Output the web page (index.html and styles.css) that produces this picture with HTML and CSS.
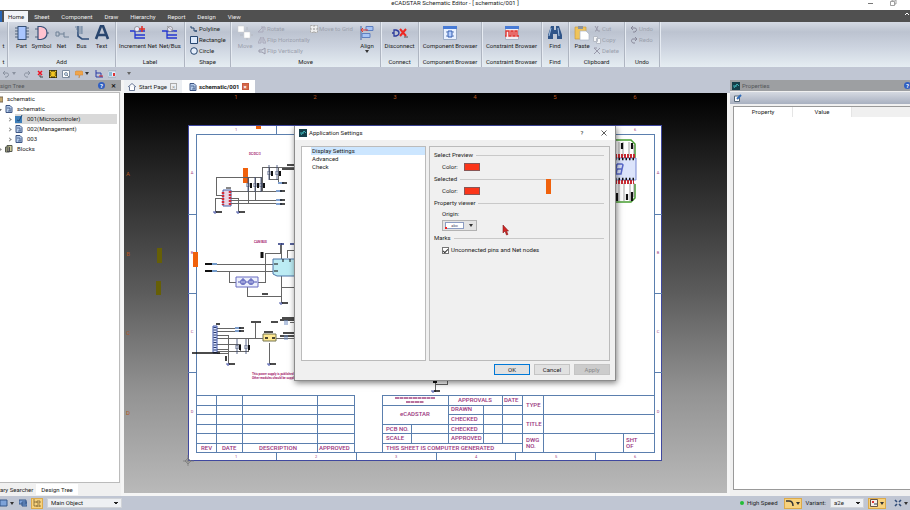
FILE: index.html
```html
<!DOCTYPE html>
<html lang="en">
<head>
<meta charset="utf-8">
<title>eCADSTAR Schematic Editor</title>
<link rel="stylesheet" href="styles.css">
</head>
<body>
<header class="titlebar">
  <span class="app-title">eCADSTAR Schematic Editor - [ schematic/001 ]</span>
  <span class="window-buttons">
    <button aria-label="Minimize"><svg width="8" height="8"><path d="M2 4.500h5" stroke="#777" fill="none"/></svg></button>
    <button aria-label="Restore"><svg width="8" height="8"><path d="M1.500 2.500h4v4h-4zM3 2V1h4v4H6" stroke="#777" stroke-width=".7" fill="none"/></svg></button>
  </span>
</header>

<nav class="menu">
  <span class="app-button"></span>
  <button class="current">Home</button><button>Sheet</button><button>Component</button><button>Draw</button><button>Hierarchy</button><button>Report</button><button>Design</button><button>View</button>
  <span class="collapse"><svg width="6" height="6"><path d="M1 4l2-2 2 2" stroke="#fff" fill="none"/></svg></span>
</nav>

<div class="ribbon">
  <section class="group"><div class="tools"><button class="big"><svg class="icon"></svg>t</button></div><h2>t</h2></section>
  <section class="group">
    <div class="tools add">
      <button class="big"><svg class="icon" viewBox="0 0 16 16"><path d="M1 3h14M1 6h14M1 9h14M1 12h14" stroke="#52647d"/><rect x="4" y="1.500" width="8" height="13" fill="#a9c6ff" stroke="#355078"/></svg>Part</button>
      <button class="big"><svg class="icon" viewBox="0 0 16 16"><path d="M1 4h3M1 12h3M12 8h3" stroke="#52647d"/><path d="M4 1.500h3c8 1 8 12 0 13H4z" fill="#ffc3d0" stroke="#355078" stroke-width="1.200"/></svg>Symbol</button>
      <button class="big"><svg class="icon" viewBox="0 0 16 16"><path d="M2 7h3v4H2zM5 9h5v3h5M10 9V7" fill="none" stroke="#6f8196"/></svg>Net</button>
      <button class="big"><svg class="icon" viewBox="0 0 16 16"><path d="M4 1v10l4 3h7" fill="none" stroke="#314f7a" stroke-width="1.600"/><path d="M1 2h7M2 4h6M3 6h5M4 8h4M8 1v8" stroke="#7186a0" fill="none"/></svg>Bus</button>
      <button class="big"><svg class="icon" viewBox="0 0 16 16"><path d="M2 14L7 1h2l5 13M4 10h8" fill="none" stroke="#29466f" stroke-width="2.600"/></svg>Text</button>
    </div><h2>Add</h2>
  </section>
  <section class="group">
    <div class="tools label">
      <button class="big"><svg class="icon" viewBox="0 0 16 16"><path d="M0 6h15M5 6v7h10M5 10h10" stroke="#2437cf" stroke-width="1.300" fill="none"/><circle cx="7" cy="4" r="2.500" fill="#eef" stroke="#777" stroke-width=".7"/><path d="M9 4h6M12 1v6" stroke="#e02e28" stroke-width="1.500"/></svg>Increment Net</button>
      <button class="big"><svg class="icon" viewBox="0 0 16 16"><path d="M0 6h15M5 6v7h10M5 10h10" stroke="#2437cf" stroke-width="1.300" fill="none"/><circle cx="8" cy="4" r="2.500" fill="#eef" stroke="#777" stroke-width=".7"/><path d="M5 1l7 6" stroke="#888" stroke-width=".7"/></svg>Net/Bus</button>
    </div><h2>Label</h2>
  </section>
  <section class="group">
    <div class="tools stack">
      <button><svg viewBox="0 0 8 8"><path d="M1 1v2h3v3h3M6 5v2" fill="none" stroke="#27466f"/></svg>Polyline</button>
      <button><svg viewBox="0 0 8 8"><path d="M.5.5h7v7h-7z" fill="#dce9fb" stroke="#27466f"/></svg>Rectangle</button>
      <button><svg viewBox="0 0 8 8"><circle cx="4" cy="4" r="3.300" fill="#e6effc" stroke="#27466f"/></svg>Circle</button>
    </div><h2>Shape</h2>
  </section>
  <section class="group">
    <div class="tools move">
      <button class="big" disabled><svg class="icon" viewBox="0 0 16 16"><path d="M1 1h6v6H1zM7 7h6v6H7z" fill="#fff" stroke="#ccc" stroke-width=".5"/><path d="M10 2v3M10 15v-2M3 10h3M14 10h2" stroke="#b4b8c0"/></svg>Move</button>
      <div class="stack">
        <button disabled><svg viewBox="0 0 8 8"><path d="M0 7l5-5v5zM3 2h4v3" fill="none" stroke="#aab"/></svg>Rotate</button>
        <button disabled><svg viewBox="0 0 8 8"><path d="M0 7l3-6v6zM5 1l3 6H5z" fill="none" stroke="#aab"/></svg>Flip Horizontally</button>
        <button disabled><svg viewBox="0 0 8 8"><path d="M1 3h3l3-2v6L4 5H1z" fill="none" stroke="#99a"/></svg>Flip Vertically</button>
      </div>
      <div class="stack"><button disabled><svg viewBox="0 0 8 8"><path d="M.5.5h7v7h-7zM4 0v8M0 4h8" fill="#eee" stroke="#aaa" stroke-dasharray="2 1"/></svg>Move to Grid</button></div>
      <button class="big"><svg class="icon" viewBox="0 0 16 16"><path d="M2 1v14" stroke="#4565a5"/><path d="M7 1.500h7v4H7zM3 8.500h8v4H3z" fill="#a6c3f4" stroke="#5e7fc0"/><path d="M2 5h7M4 3L2 5l2 2" stroke="#e3372f" fill="none"/></svg>Align<i class="caret"></i></button>
    </div><h2>Move</h2>
  </section>
  <section class="group"><div class="tools"><button class="big"><svg class="icon" viewBox="0 0 16 16"><path d="M0 8h2M2 5v6h2c4-1 4-5 0-6z" fill="none" stroke="#2e3c9c" stroke-width="1.300"/><path d="M8 4l6 7M14 4l-6 7" stroke="#ed2822" stroke-width="2"/><path d="M12 12h4" stroke="#555"/></svg>Disconnect</button></div><h2>Connect</h2></section>
  <section class="group"><div class="tools"><button class="big"><svg class="icon" viewBox="0 0 16 16"><path d="M1.500 1.500h13v13h-13z" fill="#e9f1ff" stroke="#9aaac4"/><path d="M1 1h14v3H1z" fill="#487bd6"/><path d="M6 6h4v6H6z" fill="#b6d0ff" stroke="#315baf"/><path d="M4 7h2M4 11h2M10 7h2M10 11h2" stroke="#6484bd"/></svg>Component Browser</button></div><h2>Component Browser</h2></section>
  <section class="group"><div class="tools"><button class="big"><svg class="icon" viewBox="0 0 16 16"><path d="M1.500 1.500h13v13h-13z" fill="#f3eef3" stroke="#aab3c4"/><path d="M1 1h14v3H1z" fill="#487bd6"/><path d="M1 11h1V6h3v5h2V6h2v5h2V6h2v5h2" fill="none" stroke="#e1332e" stroke-width="1.400"/></svg>Constraint Browser</button></div><h2>Constraint Browser</h2></section>
  <section class="group"><div class="tools"><button class="big"><svg class="icon" viewBox="0 0 16 16"><path d="M4 1h3v4h2V1h3l3 9v4h-5V9H6v5H1v-4z" fill="#2f5488"/><path d="M4 3l-2 8M11 3l1 8" stroke="#a7c4e7"/></svg>Find</button></div><h2>Find</h2></section>
  <section class="group">
    <div class="tools clip">
      <button class="big"><svg class="icon" viewBox="0 0 16 16"><path d="M1 2h11v12H1z" fill="#efc45b" stroke="#c79632" stroke-width=".6"/><path d="M4 1h5v3H4z" fill="#8b939f"/><path d="M6 6h6l3 3v6H6z" fill="#fff" stroke="#aab6c8" stroke-width=".7"/></svg>Paste</button>
      <div class="stack">
        <button disabled><svg viewBox="0 0 8 8"><path d="M2 1l3 5M5 1L3 6M2 6h1M5 6h2" stroke="#99a" fill="none"/></svg>Cut</button>
        <button disabled><svg viewBox="0 0 8 8"><path d="M.5.5h4v5h-4zM3.500 2.500h4v5h-4z" fill="#f4f5f7" stroke="#b5bac4"/></svg>Copy</button>
        <button disabled><svg viewBox="0 0 8 8"><path d="M1 1l6 6M7 1L1 7M1 1h3" stroke="#99a" fill="none"/></svg>Delete</button>
      </div>
    </div><h2>Clipboard</h2>
  </section>
  <section class="group">
    <div class="tools stack">
      <button disabled><svg viewBox="0 0 8 8"><path d="M3 1L1 3l2 2M1 3h4c2 0 2 3 0 4H3" stroke="#889" fill="none"/></svg>Undo</button>
      <button disabled><svg viewBox="0 0 8 8"><path d="M5 1l2 2-2 2M7 3H3C1 3 1 6 3 7h2" stroke="#889" fill="none"/></svg>Redo</button>
    </div><h2>Undo</h2>
  </section>
</div>

<div class="quick">
  <button aria-label="Undo"><svg viewBox="0 0 8 8"><path d="M3 1L1 3l2 2M1 3h4c2 0 2 3 0 4H3" stroke="#8a92a0" fill="none"/></svg></button><i class="caret dim"></i>
  <button aria-label="Redo"><svg viewBox="0 0 8 8"><path d="M5 1l2 2-2 2M7 3H3C1 3 1 6 3 7h2" stroke="#8a92a0" fill="none"/></svg></button>
  <button aria-label="Cancel"><svg viewBox="0 0 8 8"><path d="M2 1l4 4M6 1L2 5" stroke="#e12" stroke-width="1.500"/><path d="M4 5v2h3" stroke="#444" fill="none"/></svg></button>
  <button aria-label="Fit"><svg viewBox="0 0 8 8"><path d="M0 0h8v8H0z" fill="#3c3510"/><path d="M1 1l6 6M7 1L1 7M4 1v6M1 4h6" stroke="#f3c51f" stroke-width="1.200"/></svg></button>
  <button aria-label="Zoom area"><svg viewBox="0 0 8 8"><path d="M.5.5h7v7h-7z" fill="#fff" stroke="#7b8a9f"/><circle cx="4" cy="4" r="1.500" fill="#d5e7ff" stroke="#567" stroke-width=".7"/><path d="M5 5l2 2" stroke="#456" stroke-width=".7"/></svg></button>
  <button aria-label="Comment"><svg viewBox="0 0 8 8"><path d="M1 1h6l1 1v3H5L4 8V5H0V2z" fill="#efa54c" stroke="#c98234" stroke-width=".5"/></svg></button><i class="caret"></i>
  <button aria-label="Origin"><svg viewBox="0 0 8 8"><path d="M1 0v7h7M1 3h5v4" stroke="#2b3aa5" fill="none"/><path d="M4 6h4" stroke="#d33"/></svg></button>
  <button aria-label="Compare"><svg viewBox="0 0 8 8"><path d="M0 1h8v6H0z" fill="#e6efff" stroke="#789" stroke-width=".5"/><path d="M1 3h3M1 5h3" stroke="#38a"/><path d="M5 3h2v3H5z" fill="#d33"/></svg></button>
  <i class="caret more"></i>
</div>

<main class="workspace">
  <aside class="dock left">
    <h2 class="dock-title">sign Tree <button class="help" aria-label="Help">?</button><button class="close" aria-label="Close">✕</button></h2>
    <ul class="tree">
      <li class="level0"><svg viewBox="0 0 8 8"><path d="M0 2h8v5H0z" fill="#c4a76b" stroke="#765"/></svg>schematic</li>
      <li class="level1"><i class="twist open"></i><svg viewBox="0 0 8 8"><use href="#sheet"/></svg>schematic</li>
      <li class="level2 selected"><i class="twist"></i><svg viewBox="0 0 8 8"><path d="M0 1h7v7H0z" fill="#3d7db8"/><path d="M2 5l2 1 3-6" stroke="#1d4977" fill="none"/></svg>001(Microcontroler)</li>
      <li class="level2"><i class="twist"></i><svg viewBox="0 0 8 8"><use href="#sheet"/></svg>002(Management)</li>
      <li class="level2"><i class="twist"></i><svg viewBox="0 0 8 8"><use href="#sheet"/></svg>003</li>
      <li class="level1"><i class="twist"></i><svg viewBox="0 0 8 8"><path d="M2 .5h5v6H2zM.5 2h4v5h-4z" fill="#d5cf9c" stroke="#555a50"/><path d="M2 4h3M2 6h3" stroke="#445"/></svg>Blocks</li>
    </ul>
    <div class="dock-tabs"><button>ary Searcher</button><button class="current">Design Tree</button></div>
  </aside>

  <section class="editor">
    <div class="doc-tabs">
      <button><svg viewBox="0 0 8 8"><path d="M0 4l4-3.500L8 4M1.500 3.500V7.500h5v-4" fill="#fff" stroke="#46587e" stroke-width=".8"/></svg>Start Page <span class="x">×</span></button>
      <button class="current"><svg viewBox="0 0 8 8"><use href="#sheet"/></svg>schematic/001 <span class="x">×</span></button>
    </div>
    <svg class="canvas" viewBox="124 93 603 400" role="img" aria-label="Schematic sheet 001">
      <defs>
        <g id="sheet"><path d="M1 .5h4l2 2v5H1z" fill="#b5cbea" stroke="#3e5684"/><path d="M2 3h3v3M3 6h3" stroke="#3e5684" fill="none" stroke-width=".8"/></g>
        <g id="cap"><path d="M0 0v7M-2 7h4M-2 9h4M0 9v6" fill="none" stroke="#33416c" stroke-width=".8"/><path d="M3 6v5" stroke="#111" stroke-width="2"/></g>
        <g id="gnd"><path d="M-2 0h4M-1 1h2" stroke="#4552a5"/><path d="M1 0h6" stroke="#111" stroke-width="1.500"/></g>
        <g id="port"><path d="M0 0h6" stroke="#7fa0cf" stroke-width="2"/><path d="M4 0h5" stroke="#111" stroke-width="1.500"/></g>
      </defs>
      <g class="ruler"><text x="236" y="99">1</text><text x="315" y="99">2</text><text x="395" y="99">3</text><text x="475" y="99">4</text><text x="555" y="99">5</text><text x="635" y="99">6</text><text x="128" y="176">A</text><text x="128" y="256">B</text><text x="128" y="335">C</text><text x="128" y="415">D</text></g>
      <rect x="188.500" y="125.500" width="473" height="335" fill="#fff" stroke="#3f489f"/>
      <g class="rule">
        <path d="M196 134H654V452H196zM276 126v8M356 126v8M436 126v8M515 126v8M595 126v8M276 452v8M356 452v8M436 452v8M515 452v8M595 452v8M188 214h8M188 293h8M188 372h8M654 214h8M654 293h8M654 372h8"/>
        <path d="M196 395H354V452M196 405H354M196 414H354M196 424H354M196 433H354M196 443H354M216 395V452M242 395V452M317 395V452"/>
        <path d="M382 452V395H654M382 405H522M448 414H654M382 424H522M382 433H522M522 433H654M382 443H522M411 424V443M448 395V443M483 405V443M502 395V443M522 395V452M543 395V452M623 433V452"/>
      </g>
      <g class="zones"><text x="236" y="131">1</text><text x="236" y="458">1</text><text x="316" y="458">2</text><text x="396" y="458">3</text><text x="476" y="458">4</text><text x="556" y="458">5</text><text x="635" y="458">6</text><text x="635" y="131">6</text><text x="192" y="174">A</text><text x="192" y="254">B</text><text x="192" y="333">C</text><text x="192" y="413">D</text><text x="658" y="174">A</text><text x="658" y="254">B</text><text x="658" y="333">C</text><text x="658" y="413">D</text></g>
      <g class="block-text">
        <text x="201" y="450">REV</text><text x="222" y="450">DATE</text><text x="259" y="450">DESCRIPTION</text><text x="319" y="450">APPROVED</text>
        <text x="458" y="402">APPROVALS</text><text x="504" y="402">DATE</text><text x="451" y="411">DRAWN</text><text x="451" y="421">CHECKED</text><text x="451" y="431">CHECKED</text><text x="451" y="440">APPROVED</text>
        <text x="400" y="416">eCADSTAR</text><text x="386" y="431">PCB NO.</text><text x="386" y="440">SCALE</text><text x="386" y="450">THIS SHEET IS COMPUTER GENERATED</text>
        <text x="526" y="407">TYPE</text><text x="526" y="426">TITLE</text><text x="526" y="442">DWG</text><text x="526" y="448">NO.</text><text x="626" y="442">SHT</text><text x="626" y="448">OF</text>
      </g>
      <path d="M395 398h40M406 402h18" stroke="#a1447f" stroke-width="1.500" stroke-dasharray="4 .5"/>
      <g class="orange"><path d="M256 126h5v3h-5zM243 168h5v15h-5zM193 252h5v15h-5z"/><path class="muted" d="M157 248h5v15h-5zM156 281h5v14h-5z"/></g>
      <g class="schematic-title"><text x="249" y="155">DC/DC/3</text><text x="254" y="243">CAN/BUS</text><text x="252" y="375">This power supply is published for</text><text x="252" y="379">Other modules should be supplied</text></g>
      <g class="wires">
        <path d="M222 195h-6v-18h46M262 191v-24h34M224 198h-9v14M231 198h7v14M231 191h48M231 200h48M231 203h48M248 177v27M255 177v24M261 177v14M269 167v12h9v4M278 167v12"/>
        <path d="M217 264h56M217 271h56M229 271v11h7M258 282h7v-29h15v-8M247 287v9h34v7M281 243v60M281 287h14M265 260v-7M287 258v-8h8"/>
        <path d="M217 328h20M217 331h20M217 335h11v29M217 338h77M255 338v-15M217 344h23v7h-23M240 351h8v-13M255 338h8M269 343v21M276 338h18M290 322h5v16M217 349h11M217 353h11"/>
        <path d="M435 380v12M435 384h12v-4"/>
      </g>
      <use href="#cap" x="248" y="177"/><use href="#cap" x="255" y="177"/><use href="#cap" x="261" y="177"/><use href="#cap" x="269" y="165"/><use href="#cap" x="277" y="165"/>
      <use href="#port" x="276" y="191"/><use href="#port" x="276" y="200"/><use href="#port" x="276" y="204"/><use href="#port" x="278" y="183"/>
      <path d="M287 165h8M282 169h13" stroke="#111" stroke-width="1.500"/>
      <use href="#gnd" x="215" y="212"/><use href="#gnd" x="238" y="212"/>
      <path d="M223 190h8v16h-8z" fill="#e8d5e4" stroke="#4760a5"/><path d="M223 192v13M230 191v14" stroke="#d22b38" stroke-width="2.500" stroke-dasharray="2 1"/><path d="M226 188h5" stroke="#111"/>
      <path d="M273 259h23v17h-19l-4-2z" fill="#bcecf4" stroke="#4c76a9"/><path d="M274 264h4M274 271h4M283 259v3M290 259v3" stroke="#111"/>
      <path d="M278 244h6M290 244h5" stroke="#23327b" stroke-width="1.500"/><path d="M262 252v6" stroke="#111" stroke-width="3"/>
      <path d="M205 264h9M205 271h9" stroke="#111" stroke-width="1.800"/><path d="M212 264h5M212 271h5" stroke="#729aca" stroke-width="2"/>
      <path d="M236 277h22v10h-22z" fill="#edf0fb" stroke="#686dc3"/><path d="M238 282h3v-2h4v4h-4v-2M245 282h4v-2h4v4h-4v-2M253 282h4" fill="none" stroke="#4c52b5"/><path d="M243 278v7M251 278v7" stroke="#4c52b5"/><path d="M262 294h6" stroke="#111" stroke-width="1.500"/><use href="#gnd" x="281" y="303"/>
      <path d="M213 326h4v27h-4z" fill="#dfe6fc" stroke="#4059ae"/><path d="M215 327v26" stroke="#27396e" stroke-width="3" stroke-dasharray="1 1.500"/><path d="M192 353h28M216 324h4" stroke="#111" stroke-width="1.700"/>
      <use href="#port" x="235" y="328"/><use href="#port" x="235" y="331"/><use href="#cap" x="237" y="339"/><use href="#cap" x="246" y="339"/><path d="M251 322h10M226 356v5" stroke="#111" stroke-width="1.600"/>
      <path d="M263 334h13v7h-13z" fill="#ffe992" stroke="#747451"/><path d="M264 332h9M265 338h3M272 338h3" stroke="#111" stroke-width="1.500"/><use href="#gnd" x="228" y="364"/><use href="#gnd" x="269" y="364"/>
      <path d="M271 322h7M282 318h12M280 320h14M283 333h11M280 336h14" stroke="#111" stroke-width="1.400"/><path d="M285 320v5M287 320v5M285 335v5M287 335v5" stroke="#6d8bc1"/>
      <path d="M431 380h7M433 382h4" stroke="#111" stroke-width="2"/><use href="#gnd" x="433" y="391"/>
      <path d="M615 140h16l4 4v14M615 202h16l4-4v-14" fill="none" stroke="#48a032" stroke-width="1.500"/><path d="M615 158h21v22h-21" fill="#dce4fb" stroke="#7889d2"/>
      <path d="M619 142v14M623 142v14M629 142v14M634 145v11M619 183v18M624 183v18M630 183v18M634 183v14" stroke="#777" stroke-width=".7"/><path d="M622 143v6M632 143v6M617 193v8M627 194v6M632 192v9" stroke="#111" stroke-width="2.200"/><path d="M615 156h21M615 182h19" stroke="#c82c34" stroke-width="4" stroke-dasharray="2 1"/><path d="M615 159h21M615 179h21" stroke="#111" stroke-width="2.500" stroke-dasharray="1.500 2"/>
      <path d="M617 164h5l1 1-1 4h-5M622 169l-1 5h-5l1-5M617 164l-1 5" stroke="#5868ca" stroke-width="1.500" fill="none"/>
      <path d="M183 461h11M188 455v11M185 461l3-3 3 3-3 3z" fill="none" stroke="#777" stroke-width=".7"/>
    </svg>
  </section>

  <aside class="dock right">
    <h2 class="dock-title"><svg viewBox="0 0 8 8"><path d="M0 0h8v8H0z" fill="#153f49"/><path d="M2 6l3-4 2 2M1 4h4" stroke="#3daeb2" fill="none"/></svg>Properties <button class="help" aria-label="Help">?</button></h2>
    <div class="dock-tools"><button aria-label="Edit"><svg viewBox="0 0 8 8"><path d="M.5 2h5v5.500h-5z" fill="#fff" stroke="#567"/><path d="M3 5l4-4" stroke="#326cb8" stroke-width="2"/></svg></button></div>
    <div class="sheet-view"><table><thead><tr><th>Property</th><th>Value</th><td></td></tr></thead></table></div>
  </aside>
</main>

<footer class="status">
  <button aria-label="Window"><svg viewBox="0 0 8 8"><path d="M0 1h7v6H0z" fill="#7da2d8" stroke="#345789"/></svg></button><i class="caret"></i>
  <button aria-label="Display"><svg viewBox="0 0 8 8"><path d="M0 1h7v4H0zM3 3h5v4H3z" fill="#7da2d8" stroke="#345789"/></svg></button>
  <button class="on" aria-label="Tree"><svg viewBox="0 0 8 8"><path d="M1 0v7h3M1 3h3M4 2h3v2H4zM4 6h3v2H4z" fill="none" stroke="#7c6231" stroke-width=".8"/></svg></button>
  <select class="object" aria-label="Object"><option>Main Object</option></select>
  <span class="speed"><i></i>High Speed</span>
  <button class="on" aria-label="Route"><svg viewBox="0 0 8 8"><path d="M0 2h3c3 0 4 2 4 5" stroke="#333" stroke-width="1.500" fill="none"/></svg><i class="caret"></i></button>
  <label for="variant">Variant:</label><select id="variant"><option>a2e</option></select>
  <button class="on" aria-label="Variant display"><svg viewBox="0 0 8 8"><path d="M.5.5h7v7h-7z" fill="#f6eee9" stroke="#654"/><path d="M2 2h2v2H2z" fill="#d33"/><path d="M4 5h3" stroke="#345"/></svg><i class="caret"></i></button>
  <button class="fit" aria-label="Fit view"><svg viewBox="0 0 8 8"><path d="M1 1l2 2M7 1L5 3M1 7l2-2M7 7L5 5" stroke="#2f4b77" stroke-width="1.600"/></svg><i class="caret"></i></button>
</footer>

<section class="dialog" role="dialog" aria-labelledby="dialog-title">
  <header><svg viewBox="0 0 8 8"><path d="M0 0h8v8H0z" fill="#153f49"/><path d="M2 6l3-4 2 2M1 4h4" stroke="#3daeb2" fill="none"/></svg><h1 id="dialog-title">Application Settings</h1><button aria-label="Help">?</button><button aria-label="Close"><svg viewBox="0 0 8 8"><path d="M1.500 1.500l5 5M6.500 1.500l-5 5" stroke="#333" stroke-width=".8"/></svg></button></header>
  <div class="dialog-body">
    <ul class="pages"><li class="current">Display Settings</li><li>Advanced</li><li>Check</li></ul>
    <div class="pane">
      <h3>Select Preview</h3>
      <div class="field"><span>Color:</span><button class="swatch" aria-label="Preview color"></button></div>
      <h3>Selected</h3>
      <div class="field"><span>Color:</span><button class="swatch" aria-label="Selected color"></button></div>
      <h3>Property viewer</h3>
      <div class="origin"><label for="origin">Origin:</label><span class="picker"><select id="origin"><option>abc</option></select><i class="caret"></i></span></div>
      <h3>Marks</h3>
      <div class="field"><input type="checkbox" id="marks" checked><label for="marks">Unconnected pins and Net nodes</label></div>
      <i class="marker"></i>
      <svg class="pointer" viewBox="0 0 7 11"><path d="M1 0v8l2-2 1.500 4 1.500-.6L4.500 6H6.500z" fill="#d22524" stroke="#831b1b" stroke-width=".6"/></svg>
    </div>
  </div>
  <div class="actions"><button class="default">OK</button><button>Cancel</button><button disabled>Apply</button></div>
</section>
</body>
</html>
```

FILE: styles.css
```css
* { box-sizing: border-box; }
body {
  margin: 0; height: 100vh; overflow: hidden; position: relative;
  display: flex; flex-direction: column;
  background: #c0c6d3; color: #222;
  font: 6px/8px Roboto, "Noto Sans", sans-serif;
}
button, select, input { font: inherit; color: inherit; margin: 0; padding: 0; border: 0; background: none; }
button { display: flex; align-items: center; justify-content: center; white-space: nowrap; }
h1, h2, h3, ul { margin: 0; padding: 0; font: inherit; list-style: none; }
button svg, li svg, h2 svg, header svg { width: 8px; height: 8px; flex: none; }
.caret { width: 0; height: 0; border: 2px solid transparent; border-top: 3px solid #333; border-bottom: 0; flex: none; }
.caret.dim { border-top-color: #8a92a0; }

.titlebar { height: 10px; background: #fff; display: flex; justify-content: center; position: relative; line-height: 6px; }
.window-buttons { position: absolute; right: 13px; top: -1px; display: flex; gap: 15px; }

.menu { height: 12px; flex: none; background: #505050; color: #eee; display: flex; align-items: stretch; padding-top: 1px; }
.menu button { padding: 1px 6px 0; }
.menu .current { background: #f1f3f7; color: #222; padding: 1px 4px 0; }
.app-button { width: 2px; margin-right: 2px; background: #2765b5; }
.collapse { margin-left: auto; }

.ribbon {
  height: 45px; flex: none; display: grid;
  grid-template-columns: 8px 108px 69px 46px 150px 38px 63px 60px 27px 56px 35px;
  background: linear-gradient(#d5dae4, #bcc3d0 22%, #ccd3df 55%, #e5edf2);
}
.group { border-right: 1px solid #aeb5c1; box-shadow: 1px 0 #e6ebf2; display: flex; flex-direction: column; min-width: 0; }
.tools { flex: 1; display: flex; justify-content: center; align-items: flex-start; padding-top: 3px; }
.group h2 { text-align: center; height: 9px; white-space: nowrap; }
.big { flex-direction: column; }
.big .icon { width: 16px; height: 16px; margin-bottom: 1px; }
.add .big { width: 20px; }
.label { gap: 2px; }
.stack { display: flex; flex-direction: column; align-items: flex-start; justify-content: flex-start; gap: 3px; }
.tools.stack { padding: 3px 5px; }
.stack button { gap: 1px; height: 8px; }
button:disabled { color: #9ba1ad; }
.tools.move { justify-content: flex-start; padding-left: 1px; }
.move > .big { width: 26px; flex: none; }
.move > .big:last-child { margin-left: auto; }
.clip { gap: 3px; }

.quick { height: 13px; flex: none; display: flex; align-items: center; padding-left: 2px; gap: 5px; }
.quick .caret { margin: 0 1px 0 -3px; }
.quick .caret.dim { margin-right: 2px; }
.quick .more { margin-left: 6px; border-top-color: #666; }

.workspace { flex: 1; min-height: 0; display: grid; grid-template-columns: 121px 1fr 180px; background: #f0f0f0; }
.dock { display: flex; flex-direction: column; min-width: 0; }
.dock-title { height: 11px; flex: none; background: #9d9fa2; color: #55585c; display: flex; align-items: center; gap: 2px; padding: 0 4px 0 0; }
.right .dock-title { padding: 0 0 0 2px; }
.help { margin-left: auto; width: 7px; height: 7px; border-radius: 4px; background: #315fc1; color: #fff; font-weight: bold; }
.right .help { margin-right: -1px; }
.close { color: #111; font-weight: bold; width: 8px; margin-left: 2px; }
.tree { flex: 1; background: #fff; border: 1px solid #bbb; border-left: 0; margin: 1px 1px 0 0; padding-top: 1px; }
.tree li { height: 10px; display: flex; align-items: center; gap: 4px; margin-right: 2px; }
.level0 svg { margin-left: -5px; }
.level1 { margin-left: -2px; }
.level2 { margin-left: 8px; }
.tree .selected { background: linear-gradient(90deg, transparent 7px, #d9d9d9 7px); }
.twist { width: 3px; height: 3px; border: solid #888; border-width: 1px 1px 0 0; transform: rotate(45deg); }
.twist.open { border-color: #333; transform: rotate(135deg); }
.dock-tabs { height: 13px; display: flex; align-items: stretch; padding: 1px 0; }
.dock-tabs .current { background: #fff; padding: 0 5px; margin-left: 3px; }

.editor { display: flex; flex-direction: column; min-width: 0; padding: 0 3px 3px; background: #f5f5f5; }
.doc-tabs { height: 13px; flex: none; display: flex; margin: 0 -3px 0 0; background: #c0c6d3; }
.doc-tabs button { background: #eceff3; padding: 0 5px 0 4px; gap: 3px; }
.doc-tabs .current { background: #fff; font-weight: bold; gap: 2px; padding: 0 6px 0 7px; }
.x { width: 7px; height: 7px; line-height: 6px; border: 1px solid #aaa; color: #999; display: block; }
.current .x { background: #d4674a; border-color: #c75b3e; color: #fff; }
.canvas { display: block; flex: 1; width: 100%; min-height: 0; background: linear-gradient(#000, #222 18%, #5c5c5c 50%, #939393 75%, #b9b9b9); }
.ruler text { fill: #b2551f; font-size: 6px; text-anchor: middle; }
.rule { fill: none; stroke: #5b7fae; stroke-width: 1px; shape-rendering: crispEdges; }
.zones text { fill: #a1447f; font-size: 4px; text-anchor: middle; }
.block-text text { fill: #9a3580; font-size: 6px; font-weight: 500; }
.schematic-title text { fill: #a5286f; font-size: 3px; font-weight: bold; }
.orange { fill: #f0610b; }
.muted { fill: #665f06; }
.wires { fill: none; stroke: #666; stroke-width: 1px; shape-rendering: crispEdges; }

.dock-tools { height: 12px; margin-top: 1px; background: linear-gradient(#d5d9e1, #a8b0c0); display: flex; align-items: center; padding-left: 4px; }
.sheet-view { flex: 1; background: #fff; border: 1px solid #999; border-right: 0; margin: 2px 0 6px 3px; }
table { width: 100%; border-collapse: collapse; table-layout: fixed; }
th { font-weight: normal; height: 10px; padding: 0; border-right: 1px solid #e5e5e5; }
thead td { background: #f0f0f0; padding: 0; }

.status { height: 14px; flex: none; display: flex; align-items: center; gap: 4px; padding-right: 2px; }
.status .on { background: #f7d27d; border: 1px solid #dba94a; height: 11px; padding: 0 1px; gap: 2px; }
.status > .caret { margin-left: -2px; margin-right: 1px; }
select {
  appearance: none; height: 10px; padding: 0 3px; border: 1px solid #d0d3d8;
  background: linear-gradient(#222, #222) no-repeat right 3px top 3px / 4px 1px, linear-gradient(#222, #222) no-repeat right 4px top 4px / 2px 1px, #eef0f3;
}
.object { width: 75px; }
#variant { width: 34px; }
.speed { margin-left: auto; display: flex; align-items: center; gap: 3px; margin-right: 2px; }
.speed i { width: 4px; height: 4px; border-radius: 2px; background: #22bd36; }
.fit { gap: 2px; margin-left: 4px; }

.dialog { position: absolute; left: calc(50% - 161px); top: 126px; width: 322px; background: #f0f0f0; border: 1px solid #8c8c8c; border-top: 0; box-shadow: 1px 2px 6px rgba(0, 0, 0, .5); }
.dialog header { height: 14px; background: #fff; display: flex; align-items: center; gap: 2px; padding: 0 7px 0 4px; }
.dialog h1 { flex: 1; }
.dialog header button { width: 8px; margin-left: 12px; }
.dialog-body { display: grid; grid-template-columns: 125px 1fr; gap: 3px; padding: 6px 5px 0 6px; }
.pages { background: #fff; border: 1px solid #bbb; padding-left: 9px; height: 215px; }
.pages li { padding-left: 1px; }
.pages .current { background: #cce6ff; }
.pane { border: 1px solid #bbb; padding: 2px 5px 0 4px; position: relative; }
.pane h3 { display: flex; align-items: center; gap: 3px; height: 12px; }
.pane h3::after { content: ""; flex: 1; height: 1px; background: #c9c9c9; }
.field { height: 12px; display: flex; align-items: center; padding-left: 8px; }
.swatch { width: 16px; height: 8px; background: #fb3519; border: 1px solid #855; margin-left: 6px; }
.origin { display: flex; flex-direction: column; gap: 2px; padding: 1px 0 1px 8px; }
.picker { width: 35px; height: 11px; border: 1px solid #b2b2b2; background: #e4e4e4; display: flex; align-items: center; padding: 0 3px 0 2px; justify-content: space-between; position: relative; }
.picker select { width: 19px; height: 7px; border: 1px solid #8c9cc2; background: #fff; color: #446; font-size: 4px; line-height: 5px; text-align: center; }
.picker::before { content: ""; position: absolute; left: 2px; bottom: 1px; width: 2px; height: 2px; background: #e22; }
input[type="checkbox"] { appearance: none; width: 7px; height: 7px; border: 1px solid #777; background: #fff; margin-right: 2px; display: grid; place-items: center; }
input[type="checkbox"]:checked::after { content: ""; width: 4px; height: 2px; border: solid #333; border-width: 0 0 1px 1px; transform: rotate(-45deg); }
.marker { position: absolute; left: 116px; top: 32px; width: 5px; height: 15px; background: #f0610b; }
.pointer { position: absolute; left: 72px; top: 78px; width: 7px; height: 11px; }
.actions { display: flex; justify-content: flex-end; gap: 4px; padding: 3px 5px 5px; }
.actions button { width: 36px; height: 11px; background: #e1e1e1; border: 1px solid #c4c4c4; }
.actions .default { border-color: #0078d7; }
.actions button:disabled { background: #ccc; color: #888; }
```
